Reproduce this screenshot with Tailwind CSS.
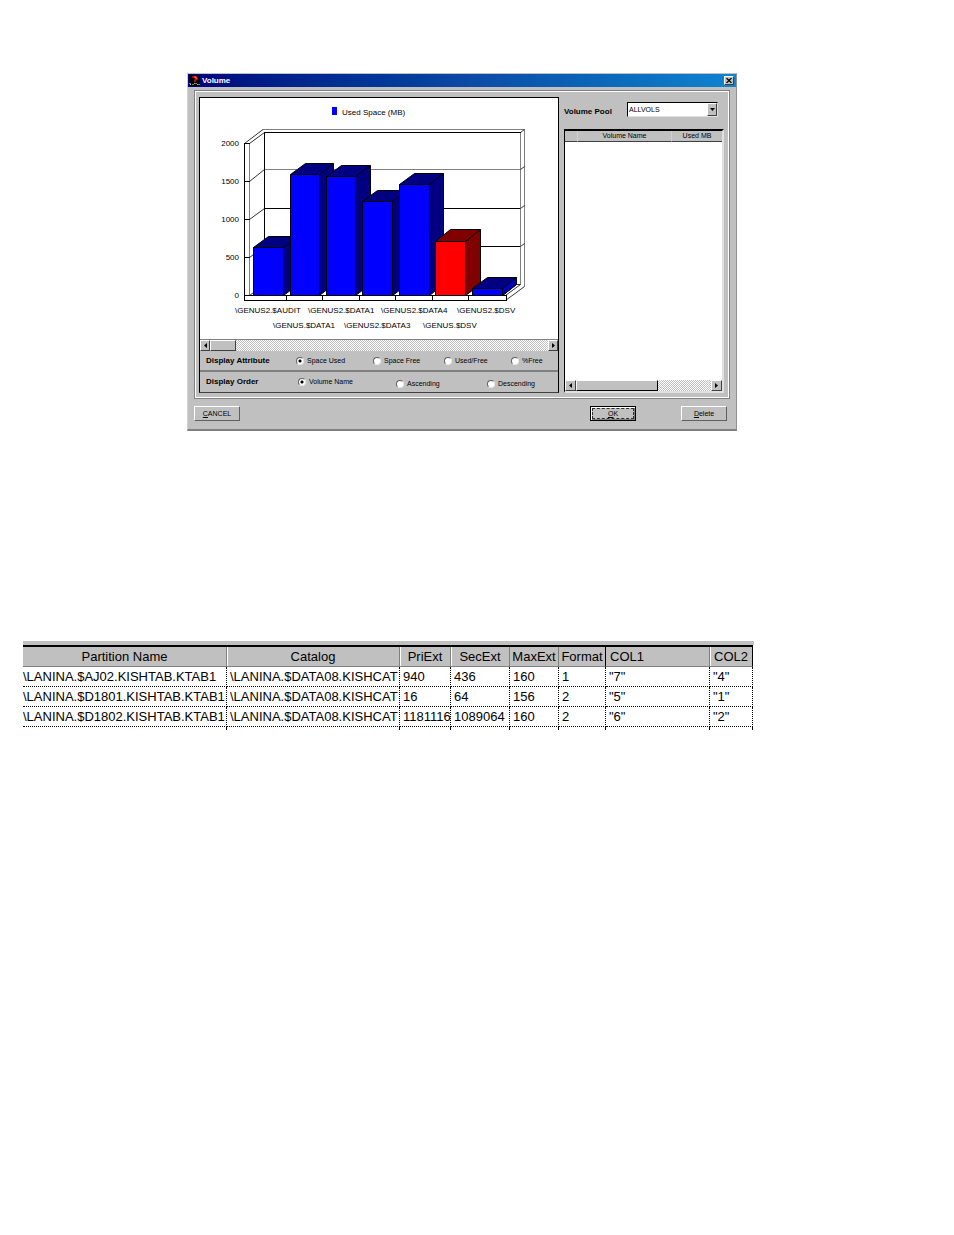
<!DOCTYPE html>
<html lang="en">
<head>
  <meta charset="UTF-8">
  <meta name="viewport" content="width=device-width, initial-scale=1.0">
  <title>Volume</title>
  <script src="https://cdn.jsdelivr.net/npm/@tailwindcss/browser@4"></script>
</head>
<body class="bg-white text-black font-['Liberation_Sans',Arial,sans-serif]">
  <main class="pt-[73px] pb-10">

    <!-- Volume dialog -->
    <section class="ml-[187px] max-w-[550px] bg-[#c0c0c0] border border-t-[#c0c0c0] border-l-[#d0d0d0] border-r-[#909090] border-b-2 border-b-[#808080] text-[7px] leading-[10px]">
      <header class="flex items-center h-[13px] pl-px pr-[2px] bg-linear-to-r from-[#00007b] via-[#0c48a4] to-[#1084d0]">
        <svg class="w-[11px] h-[11px]" viewBox="0 0 11 11">
          <rect width="11" height="11" fill="#000"/>
          <path d="M3 2h4l1 1v1L6 5v2" fill="none" stroke="#f00" stroke-width="1.5"/>
          <path d="M5 2h2v2" fill="none" stroke="#f88" stroke-width="1"/>
          <path d="M0 8.5h2M3 9.5h2M6 8.5h2M9 9.5h2" stroke="#3a9a4a"/>
          <path d="M1 9.5h1M5 8.5h1M8 9.5h1" stroke="#aaa"/>
        </svg>
        <h1 class="ml-[2px] text-white font-bold text-[8px]">Volume</h1>
        <button type="button" aria-label="Close" class="ml-auto flex items-center justify-center w-[10px] h-[9px] bg-[#c0c0c0] border border-t-white border-l-white border-r-[#404040] border-b-[#404040]">
          <svg class="w-[6px] h-[5px]" viewBox="0 0 6 5"><path d="M.5 0l5 5M5.5 0l-5 5" stroke="#000" stroke-width="1.2"/></svg>
        </button>
      </header>

      <div class="mx-[6px] mt-[3px] border border-[#808080]">
        <div class="flex gap-[5px] border border-white pt-[5px] pl-[3px] pr-[4px] pb-[4px]">

          <!-- chart and display options -->
          <div class="flex-1 min-w-0 border border-black border-b-[#404040] flex flex-col">
            <svg class="block w-full bg-white" viewBox="0 0 358 241" font-size="8" font-family="Liberation Sans, Arial, sans-serif">
              <rect x="132" y="9" width="5" height="8" fill="#0000ff"/>
              <text x="142" y="17">Used Space (MB)</text>

              <!-- walls -->
              <g fill="none" stroke="#808080">
                <path d="M63 31.5H324.5V188.5M320.5 35V187M49.5 45V197M64 71.5H320"/>
              </g>
              <g fill="none" stroke="#000" shape-rendering="crispEdges">
                <path d="M64.5 34V197M64 34.5H321M64 110.5H320M64 148.5H320"/>
                <path d="M44.5 45V203M44 45.5H50M44 83.5H50M44 121.5H50M44 159.5H50M44 197.5H306V202.5M44 202.5H306"/>
                <path d="M86.5 197V203M122.5 197V203M159.5 197V203M195.5 197V203M232.5 197V203M268.5 197V203"/>
              </g>
              <g fill="none" stroke="#000" stroke-width=".8">
                <path d="M44.5 45.5L63 31.5M49.5 45.5L64.5 34.5M49.5 83.5L64.5 71.5M49.5 121.5L64.5 110.5M49.5 159.5L64.5 148.5M49.5 197.5L64.5 186.5"/>
                <path d="M320.5 34.5L324.5 31.5M320.5 71.5L324.5 68.5M320.5 110.5L324.5 107.5M320.5 148.5L324.5 145.5M305.5 197.5L320.5 186.5M305.5 202.5L324.5 188.5M316 186.5H320"/>
              </g>

              <!-- bars: top, side, front -->
              <g stroke="#000" stroke-linejoin="round">
                <path d="M53.5 149.5L68.5 138.5H98.5V186.5L83.5 197.5V149.5Z" fill="#000080"/>
                <path d="M53.5 149.5H83.5V197.5H53.5ZM83.5 149.5L98.5 138.5" fill="#0000ff"/>
                <path d="M90.5 76.5L105.5 65.5H133.5V186.5L119.5 197.5V76.5Z" fill="#000080"/>
                <path d="M90.5 76.5H119.5V197.5H90.5ZM119.5 76.5L133.5 65.5" fill="#0000ff"/>
                <path d="M126.5 78.5L141.5 67.5H170.5V186.5L155.5 197.5V78.5Z" fill="#000080"/>
                <path d="M126.5 78.5H155.5V197.5H126.5ZM155.5 78.5L170.5 67.5" fill="#0000ff"/>
                <path d="M162.5 103.5L177.5 92.5H207.5V186.5L192.5 197.5V103.5Z" fill="#000080"/>
                <path d="M162.5 103.5H192.5V197.5H162.5ZM192.5 103.5L207.5 92.5" fill="#0000ff"/>
                <path d="M199.5 86.5L214.5 75.5H243.5V186.5L229.5 197.5V86.5Z" fill="#000080"/>
                <path d="M199.5 86.5H229.5V197.5H199.5ZM229.5 86.5L243.5 75.5" fill="#0000ff"/>
                <path d="M235.5 143.5L250.5 131.5H280.5V186.5L265.5 197.5V143.5Z" fill="#800000"/>
                <path d="M235.5 143.5H265.5V197.5H235.5ZM265.5 143.5L280.5 131.5" fill="#ff0000"/>
                <path d="M272.5 190.5L287.5 179.5H316.5V186.5L302.5 197.5V190.5Z" fill="#000080"/>
                <path d="M302.5 190.5L316.5 179.5V186.5L302.5 197.5Z" fill="#0000c0"/>
                <path d="M272.5 190.5H302.5V197.5H272.5Z" fill="#0000ff"/>
              </g>

              <g text-anchor="end">
                <text x="39" y="48">2000</text>
                <text x="39" y="86">1500</text>
                <text x="39" y="124">1000</text>
                <text x="39" y="162">500</text>
                <text x="39" y="200">0</text>
              </g>
              <text x="35" y="215">\GENUS2.$AUDIT</text>
              <text x="108" y="215">\GENUS2.$DATA1</text>
              <text x="181" y="215">\GENUS2.$DATA4</text>
              <text x="257" y="215">\GENUS2.$DSV</text>
              <text x="73" y="230">\GENUS.$DATA1</text>
              <text x="144" y="230">\GENUS2.$DATA3</text>
              <text x="223" y="230">\GENUS.$DSV</text>
            </svg>

            <div class="flex h-[12px] border-t border-[#808080] bg-[repeating-conic-gradient(#fff_0_25%,#c0c0c0_0_50%)] bg-[length:2px_2px]">
              <button type="button" aria-label="Scroll left" class="flex items-center justify-center w-[10px] bg-[#c0c0c0] border border-t-white border-l-white border-r-[#404040] border-b-[#404040]">
                <svg class="w-[3px] h-[5px]" viewBox="0 0 3 5"><path d="M3 0v5L0 2.5z"/></svg>
              </button>
              <div class="w-[26px] bg-[#c0c0c0] border border-t-white border-l-white border-r-[#404040] border-b-[#404040]"></div>
              <button type="button" aria-label="Scroll right" class="ml-auto flex items-center justify-center w-[10px] bg-[#c0c0c0] border border-t-white border-l-white border-r-[#404040] border-b-[#404040]">
                <svg class="w-[3px] h-[5px]" viewBox="0 0 3 5"><path d="M0 0v5l3-2.5z"/></svg>
              </button>
            </div>

            <div role="radiogroup" aria-labelledby="attr" class="grid grid-cols-[96px_77px_71px_67px_1fr] items-center h-[21px] border-b-2 border-[#808080]">
              <span id="attr" class="pl-[6px] text-[8px] font-bold whitespace-nowrap">Display Attribute</span>
              <label class="flex items-center gap-[3px] whitespace-nowrap"><input type="radio" name="attribute" checked class="appearance-none size-[8px] rounded-full bg-white border border-t-[#606060] border-l-[#606060] border-r-[#e8e8e8] border-b-[#e8e8e8] checked:bg-[radial-gradient(circle,#000_1px,#fff_2px)]">Space Used</label>
              <label class="flex items-center gap-[3px] whitespace-nowrap"><input type="radio" name="attribute" class="appearance-none size-[8px] rounded-full bg-white border border-t-[#606060] border-l-[#606060] border-r-[#e8e8e8] border-b-[#e8e8e8] checked:bg-[radial-gradient(circle,#000_1px,#fff_2px)]">Space Free</label>
              <label class="flex items-center gap-[3px] whitespace-nowrap"><input type="radio" name="attribute" class="appearance-none size-[8px] rounded-full bg-white border border-t-[#606060] border-l-[#606060] border-r-[#e8e8e8] border-b-[#e8e8e8] checked:bg-[radial-gradient(circle,#000_1px,#fff_2px)]">Used/Free</label>
              <label class="flex items-center gap-[3px] whitespace-nowrap"><input type="radio" name="attribute" class="appearance-none size-[8px] rounded-full bg-white border border-t-[#606060] border-l-[#606060] border-r-[#e8e8e8] border-b-[#e8e8e8] checked:bg-[radial-gradient(circle,#000_1px,#fff_2px)]">%Free</label>
            </div>
            <div role="radiogroup" aria-labelledby="order" class="grid grid-cols-[98px_98px_91px_1fr] h-[20px]">
              <span id="order" class="self-center pl-[6px] text-[8px] font-bold whitespace-nowrap">Display Order</span>
              <label class="self-center flex items-center gap-[3px] whitespace-nowrap"><input type="radio" name="order" checked class="appearance-none size-[8px] rounded-full bg-white border border-t-[#606060] border-l-[#606060] border-r-[#e8e8e8] border-b-[#e8e8e8] checked:bg-[radial-gradient(circle,#000_1px,#fff_2px)]">Volume Name</label>
              <label class="self-end pb-[3px] flex items-center gap-[3px] whitespace-nowrap"><input type="radio" name="order" class="appearance-none size-[8px] rounded-full bg-white border border-t-[#606060] border-l-[#606060] border-r-[#e8e8e8] border-b-[#e8e8e8] checked:bg-[radial-gradient(circle,#000_1px,#fff_2px)]">Ascending</label>
              <label class="self-end pb-[3px] flex items-center gap-[3px] whitespace-nowrap"><input type="radio" name="order" class="appearance-none size-[8px] rounded-full bg-white border border-t-[#606060] border-l-[#606060] border-r-[#e8e8e8] border-b-[#e8e8e8] checked:bg-[radial-gradient(circle,#000_1px,#fff_2px)]">Descending</label>
            </div>
          </div>

          <!-- volume pool -->
          <div class="w-[160px] shrink-0 flex flex-col">
            <div class="flex justify-between items-start h-[32px] pt-[5px] pr-[6px]">
              <label for="pool" class="pt-[5px] text-[8px] font-bold">Volume Pool</label>
              <div class="relative w-[91px]">
                <select id="pool" class="block appearance-none w-full h-[15px] pl-px bg-white border border-t-black border-l-black border-r-[#e0e0e0] border-b-[#e0e0e0]">
                  <option>ALLVOLS</option>
                </select>
                <span class="pointer-events-none absolute right-px top-px bottom-px w-[10px] flex items-center justify-center bg-[#c0c0c0] border border-t-white border-l-white border-r-[#404040] border-b-[#404040]">
                  <svg class="w-[5px] h-[3px]" viewBox="0 0 5 3"><path d="M0 0h5L2.5 3z"/></svg>
                </span>
              </div>
            </div>
            <div class="flex-1 flex flex-col bg-white border-2 border-t-black border-l-black border-r-[#e0e0e0] border-b-[#e0e0e0] border-l">
              <table class="w-full table-fixed border-separate border-spacing-0">
                <thead>
                  <tr class="bg-[#c0c0c0]">
                    <th class="w-[12px] h-[10px] p-0 border-b border-b-[#404040]"></th>
                    <th class="p-0 font-normal border-b border-b-[#404040] border-l border-l-[#d0d0d0]">Volume Name</th>
                    <th class="w-[51px] p-0 font-normal border-b border-b-[#404040] border-l border-l-[#d0d0d0]">Used MB</th>
                  </tr>
                </thead>
              </table>
              <div class="mt-auto flex h-[11px] bg-[repeating-conic-gradient(#fff_0_25%,#c0c0c0_0_50%)] bg-[length:2px_2px]">
                <button type="button" aria-label="Scroll left" class="flex items-center justify-center w-[11px] bg-[#c0c0c0] border border-t-white border-l-white border-r-[#404040] border-b-[#404040]">
                  <svg class="w-[3px] h-[5px]" viewBox="0 0 3 5"><path d="M3 0v5L0 2.5z"/></svg>
                </button>
                <div class="w-[82px] bg-[#c0c0c0] border border-t-white border-l-white border-r-black border-b-black"></div>
                <button type="button" aria-label="Scroll right" class="ml-auto flex items-center justify-center w-[11px] bg-[#c0c0c0] border border-t-white border-l-white border-r-[#404040] border-b-[#404040]">
                  <svg class="w-[3px] h-[5px]" viewBox="0 0 3 5"><path d="M0 0v5l3-2.5z"/></svg>
                </button>
              </div>
            </div>
          </div>
        </div>
      </div>

      <footer class="flex pt-[7px] pb-[8px] pl-[6px] pr-[9px]">
        <button type="button" class="w-[46px] h-[15px] border border-t-white border-l-white border-r-[#606060] border-b-[#606060]"><u>C</u>ANCEL</button>
        <button type="button" class="ml-auto w-[46px] h-[15px] p-px border border-black shadow-[inset_1px_1px_#fff,inset_-1px_-1px_#808080]"><span class="block leading-[9px] border border-dashed border-[#303030]"><u>O</u>K</span></button>
        <button type="button" class="ml-[45px] w-[46px] h-[15px] border border-t-white border-l-white border-r-[#606060] border-b-[#606060]"><u>D</u>elete</button>
      </footer>
    </section>

    <!-- partitions -->
    <section class="mt-[210px] ml-[23px] max-w-[731px] border-t-4 border-[#c0c0c0]">
      <table class="w-full max-w-[730px] table-fixed border-separate border-spacing-0 border-t-2 border-black text-[13px] leading-[18px] whitespace-nowrap">
        <colgroup>
          <col class="w-[204px]"><col class="w-[173px]"><col class="w-[51px]"><col class="w-[59px]"><col class="w-[49px]"><col class="w-[47px]"><col class="w-[104px]"><col class="w-[43px]">
        </colgroup>
        <thead>
          <tr class="bg-[#c0c0c0] *:p-0 *:h-[20px] *:font-normal *:border-b *:border-r *:border-[#808080]">
            <th>Partition Name</th>
            <th class="shadow-[inset_1px_0_#fff]">Catalog</th>
            <th class="shadow-[inset_1px_0_#fff]">PriExt</th>
            <th class="shadow-[inset_1px_0_#fff]">SecExt</th>
            <th>MaxExt</th>
            <th class="border-r-black!">Format</th>
            <th class="text-left pl-[4px]!">COL1</th>
            <th class="text-left pl-[4px]! border-r-black! shadow-[inset_1px_0_#fff]">COL2</th>
          </tr>
        </thead>
        <tbody class="*:*:h-[20px] *:*:p-0 *:*:pl-[3px] *:*:border-b *:*:border-r *:*:border-dotted *:*:border-black">
          <tr><td class="pl-0!">\LANINA.$AJ02.KISHTAB.KTAB1</td><td>\LANINA.$DATA08.KISHCAT</td><td>940</td><td>436</td><td>160</td><td>1</td><td>"7"</td><td>"4"</td></tr>
          <tr><td class="pl-0!">\LANINA.$D1801.KISHTAB.KTAB1</td><td>\LANINA.$DATA08.KISHCAT</td><td>16</td><td>64</td><td>156</td><td>2</td><td>"5"</td><td>"1"</td></tr>
          <tr><td class="pl-0!">\LANINA.$D1802.KISHTAB.KTAB1</td><td>\LANINA.$DATA08.KISHCAT</td><td>1181116</td><td>1089064</td><td>160</td><td>2</td><td>"6"</td><td>"2"</td></tr>
        </tbody>
        <!-- top edge of the next row -->
        <tfoot aria-hidden="true">
          <tr class="*:h-[2px] *:p-0 *:border-r *:border-dotted *:border-black"><td></td><td></td><td></td><td></td><td></td><td></td><td></td><td></td></tr>
        </tfoot>
      </table>
    </section>
  </main>
</body>
</html>
